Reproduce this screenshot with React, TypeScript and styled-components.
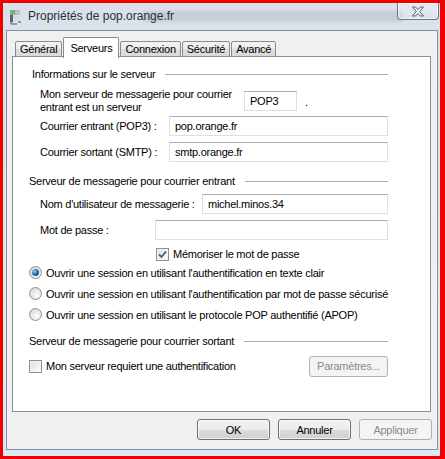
import * as React from 'react';
import styled, { createGlobalStyle } from 'styled-components';

const GlobalStyle = createGlobalStyle`
  html, body {
    margin: 0;
    padding: 0;
    background: #f00;
  }
  * {
    box-sizing: border-box;
  }
`;

const UI_FONT = `'Liberation Sans', Arial, sans-serif`;

const Frame = styled.div`
  width: 445px;
  height: 459px;
  padding: 3px 5px 3px 3px;
  background: #f20000;
`;

const Window = styled.div`
  height: 100%;
  display: flex;
  flex-direction: column;
  background: linear-gradient(180deg, #d9e1ea 0%, #dfe6ee 40%, #e4ebf3 80%, #dbe8f6 100%);
`;

const TitleBar = styled.div`
  height: 27px;
  flex: none;
  display: flex;
  align-items: flex-start;
  padding-left: 6px;
  background-image: linear-gradient(
    180deg,
    transparent 6px,
    rgba(110, 120, 135, 0.18) 10px,
    rgba(110, 120, 135, 0.18) 17px,
    transparent 21px
  );
  background-repeat: no-repeat;
  background-size: 260px 100%;
  background-position: 140px 0;
`;

const TitleIcon = styled.svg`
  width: 14px;
  height: 16px;
  margin-top: 6px;
  flex: none;
`;

const TitleText = styled.div`
  margin-left: 5px;
  margin-top: 6px;
  font-family: ${UI_FONT};
  font-size: 12px;
  line-height: 15px;
  color: #2b2f36;
`;

const CloseButton = styled.div`
  margin-left: auto;
  width: 42px;
  height: 17px;
  margin-right: 1px;
  border: 1px solid #6e7681;
  border-top: none;
  border-radius: 0 0 4px 4px;
  background: linear-gradient(180deg, rgba(255, 255, 255, 0.35), rgba(220, 228, 236, 0.55));
  box-shadow: inset 0 0 0 1px rgba(255, 255, 255, 0.6);
  display: flex;
  align-items: center;
  justify-content: center;
`;

const Client = styled.div`
  flex: 1;
  margin: 0 2px 6px 3px;
  border: 1px solid #8a9099;
  background: #f0f0f0;
  padding: 6px 6px 0 5px;
  display: flex;
  flex-direction: column;
  font-family: ${UI_FONT};
  font-size: 11px;
  letter-spacing: -0.25px;
  color: #000;
`;

const TabStrip = styled.div`
  display: flex;
  align-items: flex-end;
  height: 20px;
  padding-left: 3px;
  gap: 1px;
  position: relative;
  z-index: 1;
`;

const Tab = styled.div<{ $active?: boolean }>`
  height: ${(p) => (p.$active ? '21px' : '16px')};
  padding: ${(p) => (p.$active ? '1px 6px 0' : '0 4px')};
  border: 1px solid #898c95;
  border-bottom: ${(p) => (p.$active ? 'none' : '1px solid #898c95')};
  border-radius: 2px 2px 0 0;
  background: ${(p) =>
    p.$active ? '#fff' : 'linear-gradient(180deg, #f3f3f3 0%, #ebebeb 50%, #dedede 51%, #d9d9d9 100%)'};
  display: flex;
  align-items: center;
  line-height: 13px;
  margin-bottom: ${(p) => (p.$active ? '-1px' : '0')};
`;

const Panel = styled.div`
  height: 356px;
  margin-top: -1px;
  background: #fff;
  border: 1px solid #898c95;
  padding: 10px 42px 0 16px;
  display: flex;
  flex-direction: column;
`;

const GroupHeading = styled.div<{ $indent?: number; $gap?: number }>`
  display: flex;
  align-items: center;
  height: 14px;
  line-height: 14px;
  padding-left: ${(p) => p.$indent ?? 0}px;
  margin-top: ${(p) => p.$gap ?? 0}px;
  white-space: nowrap;

  &::after {
    content: '';
    flex: 1;
    height: 1px;
    margin-left: 10px;
    background: #a7aeb6;
  }
`;

const FieldRow = styled.div<{ $gap: number }>`
  display: flex;
  align-items: center;
  margin-top: ${(p) => p.$gap}px;
  padding-left: 11px;
`;

const FieldLabel = styled.div<{ $width: number }>`
  width: ${(p) => p.$width}px;
  flex: none;
  line-height: 13px;
  white-space: nowrap;
`;

const TextBox = styled.div<{ $width?: number }>`
  height: 20px;
  flex: ${(p) => (p.$width ? 'none' : '1')};
  width: ${(p) => (p.$width ? `${p.$width}px` : 'auto')};
  border: 1px solid #dbdfe6;
  border-top-color: #abadb3;
  background: #fff;
  padding: 0 5px;
  display: flex;
  align-items: center;
  white-space: nowrap;
`;

const Dot = styled.span`
  margin-left: 8px;
  margin-top: 2px;
`;

const CheckRow = styled.div<{ $gap: number; $indent: number }>`
  display: flex;
  align-items: center;
  height: 14px;
  margin-top: ${(p) => p.$gap}px;
  padding-left: ${(p) => p.$indent}px;
  white-space: nowrap;
`;

const CheckBox = styled.div`
  width: 13px;
  height: 13px;
  flex: none;
  margin-right: 4px;
  border: 1px solid #8e8f8f;
  background: linear-gradient(135deg, #dcdcdc 0%, #f4f4f4 70%, #fff 100%);
  box-shadow: inset 0 0 0 1px #f4f4f4;
  display: flex;
  align-items: center;
  justify-content: center;
`;

const Radio = styled.div<{ $checked?: boolean }>`
  width: 13px;
  height: 13px;
  flex: none;
  margin-right: 4px;
  border-radius: 50%;
  border: 1px solid #8e8f8f;
  background: radial-gradient(circle at 60% 65%, #fdfdfd 0%, #e4e4e4 55%, #cfcfcf 100%);
  display: flex;
  align-items: center;
  justify-content: center;

  &::after {
    content: '';
    display: ${(p) => (p.$checked ? 'block' : 'none')};
    width: 7px;
    height: 7px;
    border-radius: 50%;
    background: radial-gradient(circle at 35% 35%, #9ad0f5 0%, #2a6fb0 45%, #133e6b 100%);
  }
`;

const OptionRow = styled.div<{ $gap?: number }>`
  display: flex;
  align-items: center;
  margin-top: ${(p) => p.$gap ?? 8}px;
`;

const WinButton = styled.div<{ $disabled?: boolean; $width: number; $push?: boolean }>`
  width: ${(p) => p.$width}px;
  height: 21px;
  flex: none;
  margin-left: ${(p) => (p.$push ? 'auto' : '0')};
  border: 1px solid ${(p) => (p.$disabled ? '#adb2b5' : '#707070')};
  border-radius: 3px;
  background: ${(p) =>
    p.$disabled
      ? '#f4f4f4'
      : 'linear-gradient(180deg, #f2f2f2 0%, #ebebeb 50%, #dddddd 51%, #cfcfcf 100%)'};
  box-shadow: inset 0 0 0 1px ${(p) => (p.$disabled ? '#f4f4f4' : 'rgba(255,255,255,0.7)')};
  color: ${(p) => (p.$disabled ? '#8a8a8a' : '#000')};
  display: flex;
  align-items: center;
  justify-content: center;
  white-space: nowrap;
`;

const ButtonBar = styled.div`
  display: flex;
  justify-content: flex-end;
  gap: 8px;
  margin-top: 7px;
  margin-right: -1px;
`;

const CheckMark = () => (
  <svg width="9" height="9" viewBox="0 0 9 9">
    <path d="M1 4.5 L3.5 7 L8 1.5" fill="none" stroke="#3f5a8c" strokeWidth="1.8" />
  </svg>
);

const CloseGlyph = () => (
  <svg width="14" height="11" viewBox="0 0 14 11">
    <path
      d="M1.5 1 H4.5 L7 3.6 L9.5 1 H12.5 L8.6 5.5 L12.5 10 H9.5 L7 7.4 L4.5 10 H1.5 L5.4 5.5 Z"
      fill="#f7f9fb"
      stroke="#535b66"
      strokeWidth="1"
      strokeLinejoin="round"
    />
  </svg>
);

const AccountIcon = () => (
  <TitleIcon viewBox="0 0 14 16">
    <rect x="1" y="1" width="5" height="5" fill="#7fae7f" />
    <rect x="6" y="1" width="5" height="5" fill="#b9c0c6" />
    <rect x="1" y="6" width="3" height="7" fill="#5d6670" />
    <rect x="4" y="7" width="6" height="4" fill="#d7dbe0" />
    <path d="M2 13 V15 H8 M9 13 H12" stroke="#4b5560" strokeWidth="1" fill="none" />
  </TitleIcon>
);

export default function App() {
  return (
    <Frame>
      <GlobalStyle />
      <Window>
        <TitleBar>
          <AccountIcon />
          <TitleText>Propriétés de pop.orange.fr</TitleText>
          <CloseButton>
            <CloseGlyph />
          </CloseButton>
        </TitleBar>
        <Client>
          <TabStrip>
            <Tab>Général</Tab>
            <Tab $active>Serveurs</Tab>
            <Tab>Connexion</Tab>
            <Tab>Sécurité</Tab>
            <Tab>Avancé</Tab>
          </TabStrip>
          <Panel>
            <GroupHeading $indent={3}>Informations sur le serveur</GroupHeading>
            <FieldRow $gap={7}>
              <FieldLabel $width={204}>
                Mon serveur de messagerie pour courrier
                <br />
                entrant est un serveur
              </FieldLabel>
              <TextBox $width={53}>POP3</TextBox>
              <Dot>.</Dot>
            </FieldRow>
            <FieldRow $gap={2}>
              <FieldLabel $width={129}>Courrier entrant (POP3) :</FieldLabel>
              <TextBox>pop.orange.fr</TextBox>
            </FieldRow>
            <FieldRow $gap={6}>
              <FieldLabel $width={129}>Courrier sortant (SMTP) :</FieldLabel>
              <TextBox>smtp.orange.fr</TextBox>
            </FieldRow>

            <GroupHeading $gap={12}>Serveur de messagerie pour courrier entrant</GroupHeading>
            <FieldRow $gap={6}>
              <FieldLabel $width={162}>Nom d'utilisateur de messagerie :</FieldLabel>
              <TextBox>michel.minos.34</TextBox>
            </FieldRow>
            <FieldRow $gap={6}>
              <FieldLabel $width={115}>Mot de passe :</FieldLabel>
              <TextBox />
            </FieldRow>
            <CheckRow $gap={7} $indent={127}>
              <CheckBox>
                <CheckMark />
              </CheckBox>
              Mémoriser le mot de passe
            </CheckRow>
            <OptionRow $gap={5}>
              <Radio $checked />
              Ouvrir une session en utilisant l'authentification en texte clair
            </OptionRow>
            <OptionRow>
              <Radio />
              Ouvrir une session en utilisant l'authentification par mot de passe sécurisé
            </OptionRow>
            <OptionRow>
              <Radio />
              Ouvrir une session en utilisant le protocole POP authentifié (APOP)
            </OptionRow>

            <GroupHeading $gap={13}>Serveur de messagerie pour courrier sortant</GroupHeading>
            <CheckRow $gap={11} $indent={0}>
              <CheckBox />
              Mon serveur requiert une authentification
              <WinButton $disabled $width={79} $push>
                Paramètres...
              </WinButton>
            </CheckRow>
          </Panel>
          <ButtonBar>
            <WinButton $width={73}>OK</WinButton>
            <WinButton $width={73}>Annuler</WinButton>
            <WinButton $width={73} $disabled>
              Appliquer
            </WinButton>
          </ButtonBar>
        </Client>
      </Window>
    </Frame>
  );
}
